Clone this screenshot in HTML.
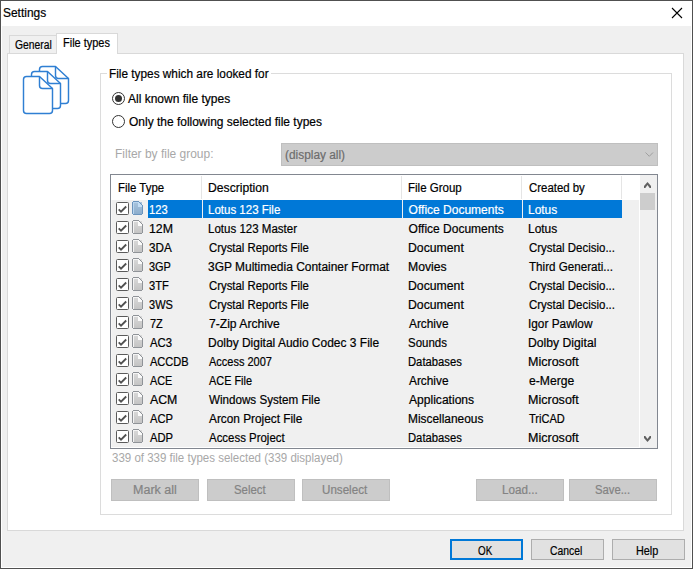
<!DOCTYPE html>
<html><head><meta charset="utf-8"><style>
html,body{margin:0;padding:0;width:693px;height:569px;overflow:hidden;background:#f0f0f0;}
.a{position:absolute;box-sizing:border-box;}
.t{position:absolute;transform-origin:0 0;font-family:"Liberation Sans",sans-serif;font-size:12px;line-height:15px;white-space:nowrap;color:#000;-webkit-text-stroke:0.2px currentColor;}
svg.a{overflow:visible;}
</style></head><body>
<div class="a" style="left:0px;top:0px;width:693px;height:569px;background:#fff;"></div><div class="a" style="left:2px;top:26px;width:689px;height:541px;background:#f0f0f0;"></div><div class="a" style="left:0;top:0;width:693px;height:569px;border:1px solid #505050;"></div><div class="t" style="left:3.10px;top:5.5px;transform:scaleX(0.9952);">Settings</div><svg class="a" style="left:671px;top:7px" width="12" height="12" viewBox="0 0 12 12"><path d="M1 1L11 11M11 1L1 11" stroke="#000" stroke-width="1.1" fill="none"/></svg><div class="a" style="left:7px;top:53px;width:677px;height:478px;border:1px solid #d9d9d9;background:#fff;"></div><div class="a" style="left:9px;top:35px;width:48px;height:18px;border:1px solid #d9d9d9;border-bottom:none;background:#f0f0f0;"></div><div class="a" style="left:56px;top:33px;width:62px;height:21px;border:1px solid #d9d9d9;border-bottom:none;background:#fff;"></div><div class="t" style="left:14.90px;top:37.5px;transform:scaleX(0.8595);">General</div><div class="t" style="left:62.59px;top:35.5px;transform:scaleX(0.9140);">File types</div><svg class="a" style="left:0;top:0" width="100" height="130"><path d="M42.5,66.5 L55.5,66.5 L68.5,78.5 L68.5,100.5 Q68.5,103.5 65.5,103.5 L42.5,103.5 Q39.5,103.5 39.5,100.5 L39.5,69.5 Q39.5,66.5 42.5,66.5 Z" fill="#fff" stroke="#2f7fd3" stroke-width="1.45" stroke-linejoin="round"/><path d="M55.5,66.5 L55.5,75.5 Q55.5,78.5 58.5,78.5 L68.5,78.5" fill="none" stroke="#2f7fd3" stroke-width="1.45"/><path d="M34.5,71.5 L47.5,71.5 L60.5,83.5 L60.5,105.5 Q60.5,108.5 57.5,108.5 L34.5,108.5 Q31.5,108.5 31.5,105.5 L31.5,74.5 Q31.5,71.5 34.5,71.5 Z" fill="#fff" stroke="#2f7fd3" stroke-width="1.45" stroke-linejoin="round"/><path d="M47.5,71.5 L47.5,80.5 Q47.5,83.5 50.5,83.5 L60.5,83.5" fill="none" stroke="#2f7fd3" stroke-width="1.45"/><path d="M26.5,76.5 L39.5,76.5 L52.5,88.5 L52.5,110.5 Q52.5,113.5 49.5,113.5 L26.5,113.5 Q23.5,113.5 23.5,110.5 L23.5,79.5 Q23.5,76.5 26.5,76.5 Z" fill="#fff" stroke="#2f7fd3" stroke-width="1.45" stroke-linejoin="round"/><path d="M39.5,76.5 L39.5,85.5 Q39.5,88.5 42.5,88.5 L52.5,88.5" fill="none" stroke="#2f7fd3" stroke-width="1.45"/></svg><div class="a" style="left:100px;top:73px;width:572px;height:442px;background:transparent;border:1px solid #dcdcdc;box-sizing:border-box;"></div><div class="a" style="left:107px;top:66px;width:164px;height:14px;background:#fff;"></div><div class="t" style="left:109.02px;top:66.5px;transform:scaleX(0.9845);">File types which are looked for</div><svg class="a" style="left:111px;top:91px" width="15" height="15"><circle cx="7.5" cy="7.5" r="6" fill="#fff" stroke="#333" stroke-width="1"/><circle cx="7.5" cy="7.5" r="3.5" fill="#333"/></svg><div class="t" style="left:128.40px;top:91.5px;transform:scaleX(1.0010);">All known file types</div><svg class="a" style="left:111px;top:114px" width="15" height="15"><circle cx="7.5" cy="7.5" r="6" fill="#fff" stroke="#333" stroke-width="1"/></svg><div class="t" style="left:128.90px;top:114.5px;transform:scaleX(0.9974);">Only the following selected file types</div><div class="t" style="left:115.20px;top:146.5px;transform:scaleX(0.9979);color:#a8a8a8;-webkit-text-stroke:0;">Filter by file group:</div><div class="a" style="left:281px;top:143px;width:377px;height:23px;background:#cccccc;border:1px solid #bfbfbf;box-sizing:border-box;"></div><div class="t" style="left:284.61px;top:147.5px;transform:scaleX(0.9898);color:#6d6d6d;">(display all)</div><svg class="a" style="left:644px;top:150px" width="11" height="8"><path d="M1.5 2.5L5.3 6.3L9 2.5" stroke="#a0a0a0" stroke-width="1" fill="none"/></svg><div class="a" style="left:110px;top:174px;width:548px;height:275px;background:#fff;border:1px solid #828790;box-sizing:border-box;"></div><div class="a" style="left:112px;top:200px;width:527px;height:247px;background:#f0f0f0;"></div><div class="a" style="left:111px;top:200px;width:1px;height:247px;background:#f7f7f7;"></div><div class="a" style="left:201px;top:176px;width:1px;height:23px;background:#e5e5e5;"></div><div class="a" style="left:401px;top:176px;width:1px;height:23px;background:#e5e5e5;"></div><div class="a" style="left:521px;top:176px;width:1px;height:23px;background:#e5e5e5;"></div><div class="a" style="left:621px;top:176px;width:1px;height:23px;background:#e5e5e5;"></div><div class="t" style="left:118.05px;top:180.5px;transform:scaleX(0.9511);">File Type</div><div class="t" style="left:207.59px;top:180.5px;transform:scaleX(1.0138);">Description</div><div class="t" style="left:407.64px;top:180.5px;transform:scaleX(0.9600);">File Group</div><div class="t" style="left:528.80px;top:180.5px;transform:scaleX(0.9508);">Created by</div><div class="a" style="left:640px;top:175px;width:17px;height:273px;background:#f0f0f0;"></div><div class="a" style="left:640px;top:193px;width:15px;height:17px;background:#cdcdcd;"></div><svg class="a" style="left:640px;top:178px" width="17" height="14"><polygon points="7.5,4 11,8 11,10 9.7,10 7.5,7.1 5.3,10 4,10 4,8" fill="#606060"/></svg><svg class="a" style="left:640px;top:432px" width="17" height="14"><polygon points="4,4 5.3,4 7.5,6.9 9.7,4 11,4 11,6 7.5,10 4,6" fill="#606060"/></svg><div class="a" style="left:148px;top:200px;width:54px;height:18px;background:#0078d7;"></div><div class="a" style="left:203px;top:200px;width:199px;height:18px;background:#0078d7;"></div><div class="a" style="left:403px;top:200px;width:119px;height:18px;background:#0078d7;"></div><div class="a" style="left:523px;top:200px;width:99px;height:18px;background:#0078d7;"></div><svg class="a" style="left:116px;top:202px" width="13" height="13"><rect x="0.5" y="0.5" width="12" height="12" rx="1" fill="#fff" stroke="#5a5a5a"/><path d="M2.7 7.4L5 9.7L10.2 4.5" stroke="#505050" stroke-width="1.8" fill="none"/></svg><svg class="a" style="left:132px;top:201px" width="11" height="14" shape-rendering="crispEdges"><defs><linearGradient id="g201" x1="0" y1="0" x2="0" y2="1"><stop offset="0" stop-color="#a9c4dd"/><stop offset="1" stop-color="#8cadcc"/></linearGradient></defs><rect x="1" y="1" width="9" height="12" fill="url(#g201)"/><rect x="1" y="1" width="6" height="1" fill="#b9d5ef"/><rect x="1" y="1" width="1" height="12" fill="#b9d5ef"/><rect x="6" y="1" width="1" height="5" fill="#c4def5"/><rect x="6" y="5" width="4" height="1" fill="#c4def5"/><rect x="7" y="2" width="1" height="3" fill="#c4def5"/><rect x="8" y="3" width="1" height="2" fill="#c4def5"/><rect x="9" y="4" width="1" height="1" fill="#c4def5"/><rect x="7" y="1" width="1" height="1" fill="#c4def5"/><rect x="1" y="0" width="6" height="1" fill="#6b94bd"/><rect x="7" y="1" width="1" height="1" fill="#6b94bd"/><rect x="8" y="2" width="1" height="1" fill="#6b94bd"/><rect x="9" y="3" width="1" height="1" fill="#6b94bd"/><rect x="10" y="4" width="1" height="9" fill="#6b94bd"/><rect x="0" y="1" width="1" height="12" fill="#6b94bd"/><rect x="1" y="13" width="9" height="1" fill="#6b94bd"/></svg><div class="t" style="left:149.17px;top:202.5px;transform:scaleX(0.9316);color:#fff;">123</div><div class="t" style="left:207.54px;top:202.5px;transform:scaleX(0.9595);color:#fff;">Lotus 123 File</div><div class="t" style="left:408.60px;top:202.5px;transform:scaleX(1.0000);color:#fff;">Office Documents</div><div class="t" style="left:527.80px;top:202.5px;transform:scaleX(0.9964);color:#fff;">Lotus</div><svg class="a" style="left:116px;top:221px" width="13" height="13"><rect x="0.5" y="0.5" width="12" height="12" rx="1" fill="#fff" stroke="#5a5a5a"/><path d="M2.7 7.4L5 9.7L10.2 4.5" stroke="#505050" stroke-width="1.8" fill="none"/></svg><svg class="a" style="left:132px;top:220px" width="11" height="14" shape-rendering="crispEdges"><defs><linearGradient id="g220" x1="0" y1="0" x2="0" y2="1"><stop offset="0" stop-color="#d9d9d9"/><stop offset="1" stop-color="#c4c4c4"/></linearGradient></defs><rect x="1" y="1" width="9" height="12" fill="url(#g220)"/><rect x="1" y="1" width="6" height="1" fill="#f4f4f4"/><rect x="1" y="1" width="1" height="12" fill="#f4f4f4"/><rect x="6" y="1" width="1" height="5" fill="#fbfbfb"/><rect x="6" y="5" width="4" height="1" fill="#fbfbfb"/><rect x="7" y="2" width="1" height="3" fill="#fbfbfb"/><rect x="8" y="3" width="1" height="2" fill="#fbfbfb"/><rect x="9" y="4" width="1" height="1" fill="#fbfbfb"/><rect x="7" y="1" width="1" height="1" fill="#fbfbfb"/><rect x="1" y="0" width="6" height="1" fill="#8f9398"/><rect x="7" y="1" width="1" height="1" fill="#8f9398"/><rect x="8" y="2" width="1" height="1" fill="#8f9398"/><rect x="9" y="3" width="1" height="1" fill="#8f9398"/><rect x="10" y="4" width="1" height="9" fill="#8f9398"/><rect x="0" y="1" width="1" height="12" fill="#8f9398"/><rect x="1" y="13" width="9" height="1" fill="#8f9398"/></svg><div class="t" style="left:149.07px;top:221.5px;transform:scaleX(1.0273);">12M</div><div class="t" style="left:207.54px;top:221.5px;transform:scaleX(0.9598);">Lotus 123 Master</div><div class="t" style="left:408.60px;top:221.5px;transform:scaleX(1.0000);">Office Documents</div><div class="t" style="left:527.80px;top:221.5px;transform:scaleX(0.9964);">Lotus</div><svg class="a" style="left:116px;top:240px" width="13" height="13"><rect x="0.5" y="0.5" width="12" height="12" rx="1" fill="#fff" stroke="#5a5a5a"/><path d="M2.7 7.4L5 9.7L10.2 4.5" stroke="#505050" stroke-width="1.8" fill="none"/></svg><svg class="a" style="left:132px;top:239px" width="11" height="14" shape-rendering="crispEdges"><defs><linearGradient id="g239" x1="0" y1="0" x2="0" y2="1"><stop offset="0" stop-color="#d9d9d9"/><stop offset="1" stop-color="#c4c4c4"/></linearGradient></defs><rect x="1" y="1" width="9" height="12" fill="url(#g239)"/><rect x="1" y="1" width="6" height="1" fill="#f4f4f4"/><rect x="1" y="1" width="1" height="12" fill="#f4f4f4"/><rect x="6" y="1" width="1" height="5" fill="#fbfbfb"/><rect x="6" y="5" width="4" height="1" fill="#fbfbfb"/><rect x="7" y="2" width="1" height="3" fill="#fbfbfb"/><rect x="8" y="3" width="1" height="2" fill="#fbfbfb"/><rect x="9" y="4" width="1" height="1" fill="#fbfbfb"/><rect x="7" y="1" width="1" height="1" fill="#fbfbfb"/><rect x="1" y="0" width="6" height="1" fill="#8f9398"/><rect x="7" y="1" width="1" height="1" fill="#8f9398"/><rect x="8" y="2" width="1" height="1" fill="#8f9398"/><rect x="9" y="3" width="1" height="1" fill="#8f9398"/><rect x="10" y="4" width="1" height="9" fill="#8f9398"/><rect x="0" y="1" width="1" height="12" fill="#8f9398"/><rect x="1" y="13" width="9" height="1" fill="#8f9398"/></svg><div class="t" style="left:149.13px;top:240.5px;transform:scaleX(0.9727);">3DA</div><div class="t" style="left:208.50px;top:240.5px;transform:scaleX(0.9476);">Crystal Reports File</div><div class="t" style="left:407.58px;top:240.5px;transform:scaleX(1.0204);">Document</div><div class="t" style="left:528.80px;top:240.5px;transform:scaleX(0.9551);">Crystal Decisio...</div><svg class="a" style="left:116px;top:259px" width="13" height="13"><rect x="0.5" y="0.5" width="12" height="12" rx="1" fill="#fff" stroke="#5a5a5a"/><path d="M2.7 7.4L5 9.7L10.2 4.5" stroke="#505050" stroke-width="1.8" fill="none"/></svg><svg class="a" style="left:132px;top:258px" width="11" height="14" shape-rendering="crispEdges"><defs><linearGradient id="g258" x1="0" y1="0" x2="0" y2="1"><stop offset="0" stop-color="#d9d9d9"/><stop offset="1" stop-color="#c4c4c4"/></linearGradient></defs><rect x="1" y="1" width="9" height="12" fill="url(#g258)"/><rect x="1" y="1" width="6" height="1" fill="#f4f4f4"/><rect x="1" y="1" width="1" height="12" fill="#f4f4f4"/><rect x="6" y="1" width="1" height="5" fill="#fbfbfb"/><rect x="6" y="5" width="4" height="1" fill="#fbfbfb"/><rect x="7" y="2" width="1" height="3" fill="#fbfbfb"/><rect x="8" y="3" width="1" height="2" fill="#fbfbfb"/><rect x="9" y="4" width="1" height="1" fill="#fbfbfb"/><rect x="7" y="1" width="1" height="1" fill="#fbfbfb"/><rect x="1" y="0" width="6" height="1" fill="#8f9398"/><rect x="7" y="1" width="1" height="1" fill="#8f9398"/><rect x="8" y="2" width="1" height="1" fill="#8f9398"/><rect x="9" y="3" width="1" height="1" fill="#8f9398"/><rect x="10" y="4" width="1" height="9" fill="#8f9398"/><rect x="0" y="1" width="1" height="12" fill="#8f9398"/><rect x="1" y="13" width="9" height="1" fill="#8f9398"/></svg><div class="t" style="left:149.19px;top:259.5px;transform:scaleX(0.9130);">3GP</div><div class="t" style="left:207.50px;top:259.5px;transform:scaleX(0.9961);">3GP Multimedia Container Format</div><div class="t" style="left:407.58px;top:259.5px;transform:scaleX(1.0162);">Movies</div><div class="t" style="left:528.80px;top:259.5px;transform:scaleX(0.9686);">Third Generati...</div><svg class="a" style="left:116px;top:278px" width="13" height="13"><rect x="0.5" y="0.5" width="12" height="12" rx="1" fill="#fff" stroke="#5a5a5a"/><path d="M2.7 7.4L5 9.7L10.2 4.5" stroke="#505050" stroke-width="1.8" fill="none"/></svg><svg class="a" style="left:132px;top:277px" width="11" height="14" shape-rendering="crispEdges"><defs><linearGradient id="g277" x1="0" y1="0" x2="0" y2="1"><stop offset="0" stop-color="#d9d9d9"/><stop offset="1" stop-color="#c4c4c4"/></linearGradient></defs><rect x="1" y="1" width="9" height="12" fill="url(#g277)"/><rect x="1" y="1" width="6" height="1" fill="#f4f4f4"/><rect x="1" y="1" width="1" height="12" fill="#f4f4f4"/><rect x="6" y="1" width="1" height="5" fill="#fbfbfb"/><rect x="6" y="5" width="4" height="1" fill="#fbfbfb"/><rect x="7" y="2" width="1" height="3" fill="#fbfbfb"/><rect x="8" y="3" width="1" height="2" fill="#fbfbfb"/><rect x="9" y="4" width="1" height="1" fill="#fbfbfb"/><rect x="7" y="1" width="1" height="1" fill="#fbfbfb"/><rect x="1" y="0" width="6" height="1" fill="#8f9398"/><rect x="7" y="1" width="1" height="1" fill="#8f9398"/><rect x="8" y="2" width="1" height="1" fill="#8f9398"/><rect x="9" y="3" width="1" height="1" fill="#8f9398"/><rect x="10" y="4" width="1" height="9" fill="#8f9398"/><rect x="0" y="1" width="1" height="12" fill="#8f9398"/><rect x="1" y="13" width="9" height="1" fill="#8f9398"/></svg><div class="t" style="left:149.17px;top:278.5px;transform:scaleX(0.9300);">3TF</div><div class="t" style="left:208.50px;top:278.5px;transform:scaleX(0.9476);">Crystal Reports File</div><div class="t" style="left:407.58px;top:278.5px;transform:scaleX(1.0204);">Document</div><div class="t" style="left:528.80px;top:278.5px;transform:scaleX(0.9551);">Crystal Decisio...</div><svg class="a" style="left:116px;top:297px" width="13" height="13"><rect x="0.5" y="0.5" width="12" height="12" rx="1" fill="#fff" stroke="#5a5a5a"/><path d="M2.7 7.4L5 9.7L10.2 4.5" stroke="#505050" stroke-width="1.8" fill="none"/></svg><svg class="a" style="left:132px;top:296px" width="11" height="14" shape-rendering="crispEdges"><defs><linearGradient id="g296" x1="0" y1="0" x2="0" y2="1"><stop offset="0" stop-color="#d9d9d9"/><stop offset="1" stop-color="#c4c4c4"/></linearGradient></defs><rect x="1" y="1" width="9" height="12" fill="url(#g296)"/><rect x="1" y="1" width="6" height="1" fill="#f4f4f4"/><rect x="1" y="1" width="1" height="12" fill="#f4f4f4"/><rect x="6" y="1" width="1" height="5" fill="#fbfbfb"/><rect x="6" y="5" width="4" height="1" fill="#fbfbfb"/><rect x="7" y="2" width="1" height="3" fill="#fbfbfb"/><rect x="8" y="3" width="1" height="2" fill="#fbfbfb"/><rect x="9" y="4" width="1" height="1" fill="#fbfbfb"/><rect x="7" y="1" width="1" height="1" fill="#fbfbfb"/><rect x="1" y="0" width="6" height="1" fill="#8f9398"/><rect x="7" y="1" width="1" height="1" fill="#8f9398"/><rect x="8" y="2" width="1" height="1" fill="#8f9398"/><rect x="9" y="3" width="1" height="1" fill="#8f9398"/><rect x="10" y="4" width="1" height="9" fill="#8f9398"/><rect x="0" y="1" width="1" height="12" fill="#8f9398"/><rect x="1" y="13" width="9" height="1" fill="#8f9398"/></svg><div class="t" style="left:149.18px;top:297.5px;transform:scaleX(0.9200);">3WS</div><div class="t" style="left:208.50px;top:297.5px;transform:scaleX(0.9476);">Crystal Reports File</div><div class="t" style="left:407.58px;top:297.5px;transform:scaleX(1.0204);">Document</div><div class="t" style="left:528.80px;top:297.5px;transform:scaleX(0.9551);">Crystal Decisio...</div><svg class="a" style="left:116px;top:316px" width="13" height="13"><rect x="0.5" y="0.5" width="12" height="12" rx="1" fill="#fff" stroke="#5a5a5a"/><path d="M2.7 7.4L5 9.7L10.2 4.5" stroke="#505050" stroke-width="1.8" fill="none"/></svg><svg class="a" style="left:132px;top:315px" width="11" height="14" shape-rendering="crispEdges"><defs><linearGradient id="g315" x1="0" y1="0" x2="0" y2="1"><stop offset="0" stop-color="#d9d9d9"/><stop offset="1" stop-color="#c4c4c4"/></linearGradient></defs><rect x="1" y="1" width="9" height="12" fill="url(#g315)"/><rect x="1" y="1" width="6" height="1" fill="#f4f4f4"/><rect x="1" y="1" width="1" height="12" fill="#f4f4f4"/><rect x="6" y="1" width="1" height="5" fill="#fbfbfb"/><rect x="6" y="5" width="4" height="1" fill="#fbfbfb"/><rect x="7" y="2" width="1" height="3" fill="#fbfbfb"/><rect x="8" y="3" width="1" height="2" fill="#fbfbfb"/><rect x="9" y="4" width="1" height="1" fill="#fbfbfb"/><rect x="7" y="1" width="1" height="1" fill="#fbfbfb"/><rect x="1" y="0" width="6" height="1" fill="#8f9398"/><rect x="7" y="1" width="1" height="1" fill="#8f9398"/><rect x="8" y="2" width="1" height="1" fill="#8f9398"/><rect x="9" y="3" width="1" height="1" fill="#8f9398"/><rect x="10" y="4" width="1" height="9" fill="#8f9398"/><rect x="0" y="1" width="1" height="12" fill="#8f9398"/><rect x="1" y="13" width="9" height="1" fill="#8f9398"/></svg><div class="t" style="left:150.10px;top:316.5px;transform:scaleX(0.9143);">7Z</div><div class="t" style="left:208.50px;top:316.5px;transform:scaleX(1.0100);">7-Zip Archive</div><div class="t" style="left:408.60px;top:316.5px;transform:scaleX(0.9875);">Archive</div><div class="t" style="left:527.81px;top:316.5px;transform:scaleX(0.9862);">Igor Pawlow</div><svg class="a" style="left:116px;top:335px" width="13" height="13"><rect x="0.5" y="0.5" width="12" height="12" rx="1" fill="#fff" stroke="#5a5a5a"/><path d="M2.7 7.4L5 9.7L10.2 4.5" stroke="#505050" stroke-width="1.8" fill="none"/></svg><svg class="a" style="left:132px;top:334px" width="11" height="14" shape-rendering="crispEdges"><defs><linearGradient id="g334" x1="0" y1="0" x2="0" y2="1"><stop offset="0" stop-color="#d9d9d9"/><stop offset="1" stop-color="#c4c4c4"/></linearGradient></defs><rect x="1" y="1" width="9" height="12" fill="url(#g334)"/><rect x="1" y="1" width="6" height="1" fill="#f4f4f4"/><rect x="1" y="1" width="1" height="12" fill="#f4f4f4"/><rect x="6" y="1" width="1" height="5" fill="#fbfbfb"/><rect x="6" y="5" width="4" height="1" fill="#fbfbfb"/><rect x="7" y="2" width="1" height="3" fill="#fbfbfb"/><rect x="8" y="3" width="1" height="2" fill="#fbfbfb"/><rect x="9" y="4" width="1" height="1" fill="#fbfbfb"/><rect x="7" y="1" width="1" height="1" fill="#fbfbfb"/><rect x="1" y="0" width="6" height="1" fill="#8f9398"/><rect x="7" y="1" width="1" height="1" fill="#8f9398"/><rect x="8" y="2" width="1" height="1" fill="#8f9398"/><rect x="9" y="3" width="1" height="1" fill="#8f9398"/><rect x="10" y="4" width="1" height="9" fill="#8f9398"/><rect x="0" y="1" width="1" height="12" fill="#8f9398"/><rect x="1" y="13" width="9" height="1" fill="#8f9398"/></svg><div class="t" style="left:150.10px;top:335.5px;transform:scaleX(0.9435);">AC3</div><div class="t" style="left:207.50px;top:335.5px;transform:scaleX(0.9982);">Dolby Digital Audio Codec 3 File</div><div class="t" style="left:407.65px;top:335.5px;transform:scaleX(0.9550);">Sounds</div><div class="t" style="left:527.78px;top:335.5px;transform:scaleX(1.0152);">Dolby Digital</div><svg class="a" style="left:116px;top:354px" width="13" height="13"><rect x="0.5" y="0.5" width="12" height="12" rx="1" fill="#fff" stroke="#5a5a5a"/><path d="M2.7 7.4L5 9.7L10.2 4.5" stroke="#505050" stroke-width="1.8" fill="none"/></svg><svg class="a" style="left:132px;top:353px" width="11" height="14" shape-rendering="crispEdges"><defs><linearGradient id="g353" x1="0" y1="0" x2="0" y2="1"><stop offset="0" stop-color="#d9d9d9"/><stop offset="1" stop-color="#c4c4c4"/></linearGradient></defs><rect x="1" y="1" width="9" height="12" fill="url(#g353)"/><rect x="1" y="1" width="6" height="1" fill="#f4f4f4"/><rect x="1" y="1" width="1" height="12" fill="#f4f4f4"/><rect x="6" y="1" width="1" height="5" fill="#fbfbfb"/><rect x="6" y="5" width="4" height="1" fill="#fbfbfb"/><rect x="7" y="2" width="1" height="3" fill="#fbfbfb"/><rect x="8" y="3" width="1" height="2" fill="#fbfbfb"/><rect x="9" y="4" width="1" height="1" fill="#fbfbfb"/><rect x="7" y="1" width="1" height="1" fill="#fbfbfb"/><rect x="1" y="0" width="6" height="1" fill="#8f9398"/><rect x="7" y="1" width="1" height="1" fill="#8f9398"/><rect x="8" y="2" width="1" height="1" fill="#8f9398"/><rect x="9" y="3" width="1" height="1" fill="#8f9398"/><rect x="10" y="4" width="1" height="9" fill="#8f9398"/><rect x="0" y="1" width="1" height="12" fill="#8f9398"/><rect x="1" y="13" width="9" height="1" fill="#8f9398"/></svg><div class="t" style="left:150.10px;top:354.5px;transform:scaleX(0.9214);">ACCDB</div><div class="t" style="left:208.50px;top:354.5px;transform:scaleX(0.9162);">Access 2007</div><div class="t" style="left:407.66px;top:354.5px;transform:scaleX(0.9375);">Databases</div><div class="t" style="left:527.76px;top:354.5px;transform:scaleX(1.0438);">Microsoft</div><svg class="a" style="left:116px;top:373px" width="13" height="13"><rect x="0.5" y="0.5" width="12" height="12" rx="1" fill="#fff" stroke="#5a5a5a"/><path d="M2.7 7.4L5 9.7L10.2 4.5" stroke="#505050" stroke-width="1.8" fill="none"/></svg><svg class="a" style="left:132px;top:372px" width="11" height="14" shape-rendering="crispEdges"><defs><linearGradient id="g372" x1="0" y1="0" x2="0" y2="1"><stop offset="0" stop-color="#d9d9d9"/><stop offset="1" stop-color="#c4c4c4"/></linearGradient></defs><rect x="1" y="1" width="9" height="12" fill="url(#g372)"/><rect x="1" y="1" width="6" height="1" fill="#f4f4f4"/><rect x="1" y="1" width="1" height="12" fill="#f4f4f4"/><rect x="6" y="1" width="1" height="5" fill="#fbfbfb"/><rect x="6" y="5" width="4" height="1" fill="#fbfbfb"/><rect x="7" y="2" width="1" height="3" fill="#fbfbfb"/><rect x="8" y="3" width="1" height="2" fill="#fbfbfb"/><rect x="9" y="4" width="1" height="1" fill="#fbfbfb"/><rect x="7" y="1" width="1" height="1" fill="#fbfbfb"/><rect x="1" y="0" width="6" height="1" fill="#8f9398"/><rect x="7" y="1" width="1" height="1" fill="#8f9398"/><rect x="8" y="2" width="1" height="1" fill="#8f9398"/><rect x="9" y="3" width="1" height="1" fill="#8f9398"/><rect x="10" y="4" width="1" height="9" fill="#8f9398"/><rect x="0" y="1" width="1" height="12" fill="#8f9398"/><rect x="1" y="13" width="9" height="1" fill="#8f9398"/></svg><div class="t" style="left:150.10px;top:373.5px;transform:scaleX(0.9042);">ACE</div><div class="t" style="left:208.50px;top:373.5px;transform:scaleX(0.9085);">ACE File</div><div class="t" style="left:408.60px;top:373.5px;transform:scaleX(0.9875);">Archive</div><div class="t" style="left:528.80px;top:373.5px;transform:scaleX(1.0114);">e-Merge</div><svg class="a" style="left:116px;top:392px" width="13" height="13"><rect x="0.5" y="0.5" width="12" height="12" rx="1" fill="#fff" stroke="#5a5a5a"/><path d="M2.7 7.4L5 9.7L10.2 4.5" stroke="#505050" stroke-width="1.8" fill="none"/></svg><svg class="a" style="left:132px;top:391px" width="11" height="14" shape-rendering="crispEdges"><defs><linearGradient id="g391" x1="0" y1="0" x2="0" y2="1"><stop offset="0" stop-color="#d9d9d9"/><stop offset="1" stop-color="#c4c4c4"/></linearGradient></defs><rect x="1" y="1" width="9" height="12" fill="url(#g391)"/><rect x="1" y="1" width="6" height="1" fill="#f4f4f4"/><rect x="1" y="1" width="1" height="12" fill="#f4f4f4"/><rect x="6" y="1" width="1" height="5" fill="#fbfbfb"/><rect x="6" y="5" width="4" height="1" fill="#fbfbfb"/><rect x="7" y="2" width="1" height="3" fill="#fbfbfb"/><rect x="8" y="3" width="1" height="2" fill="#fbfbfb"/><rect x="9" y="4" width="1" height="1" fill="#fbfbfb"/><rect x="7" y="1" width="1" height="1" fill="#fbfbfb"/><rect x="1" y="0" width="6" height="1" fill="#8f9398"/><rect x="7" y="1" width="1" height="1" fill="#8f9398"/><rect x="8" y="2" width="1" height="1" fill="#8f9398"/><rect x="9" y="3" width="1" height="1" fill="#8f9398"/><rect x="10" y="4" width="1" height="9" fill="#8f9398"/><rect x="0" y="1" width="1" height="12" fill="#8f9398"/><rect x="1" y="13" width="9" height="1" fill="#8f9398"/></svg><div class="t" style="left:150.10px;top:392.5px;transform:scaleX(1.0269);">ACM</div><div class="t" style="left:208.50px;top:392.5px;transform:scaleX(0.9693);">Windows System File</div><div class="t" style="left:408.60px;top:392.5px;transform:scaleX(1.0062);">Applications</div><div class="t" style="left:527.76px;top:392.5px;transform:scaleX(1.0438);">Microsoft</div><svg class="a" style="left:116px;top:411px" width="13" height="13"><rect x="0.5" y="0.5" width="12" height="12" rx="1" fill="#fff" stroke="#5a5a5a"/><path d="M2.7 7.4L5 9.7L10.2 4.5" stroke="#505050" stroke-width="1.8" fill="none"/></svg><svg class="a" style="left:132px;top:410px" width="11" height="14" shape-rendering="crispEdges"><defs><linearGradient id="g410" x1="0" y1="0" x2="0" y2="1"><stop offset="0" stop-color="#d9d9d9"/><stop offset="1" stop-color="#c4c4c4"/></linearGradient></defs><rect x="1" y="1" width="9" height="12" fill="url(#g410)"/><rect x="1" y="1" width="6" height="1" fill="#f4f4f4"/><rect x="1" y="1" width="1" height="12" fill="#f4f4f4"/><rect x="6" y="1" width="1" height="5" fill="#fbfbfb"/><rect x="6" y="5" width="4" height="1" fill="#fbfbfb"/><rect x="7" y="2" width="1" height="3" fill="#fbfbfb"/><rect x="8" y="3" width="1" height="2" fill="#fbfbfb"/><rect x="9" y="4" width="1" height="1" fill="#fbfbfb"/><rect x="7" y="1" width="1" height="1" fill="#fbfbfb"/><rect x="1" y="0" width="6" height="1" fill="#8f9398"/><rect x="7" y="1" width="1" height="1" fill="#8f9398"/><rect x="8" y="2" width="1" height="1" fill="#8f9398"/><rect x="9" y="3" width="1" height="1" fill="#8f9398"/><rect x="10" y="4" width="1" height="9" fill="#8f9398"/><rect x="0" y="1" width="1" height="12" fill="#8f9398"/><rect x="1" y="13" width="9" height="1" fill="#8f9398"/></svg><div class="t" style="left:150.10px;top:411.5px;transform:scaleX(0.9333);">ACP</div><div class="t" style="left:208.50px;top:411.5px;transform:scaleX(0.9851);">Arcon Project File</div><div class="t" style="left:407.61px;top:411.5px;transform:scaleX(0.9920);">Miscellaneous</div><div class="t" style="left:528.80px;top:411.5px;transform:scaleX(0.9179);">TriCAD</div><svg class="a" style="left:116px;top:430px" width="13" height="13"><rect x="0.5" y="0.5" width="12" height="12" rx="1" fill="#fff" stroke="#5a5a5a"/><path d="M2.7 7.4L5 9.7L10.2 4.5" stroke="#505050" stroke-width="1.8" fill="none"/></svg><svg class="a" style="left:132px;top:429px" width="11" height="14" shape-rendering="crispEdges"><defs><linearGradient id="g429" x1="0" y1="0" x2="0" y2="1"><stop offset="0" stop-color="#d9d9d9"/><stop offset="1" stop-color="#c4c4c4"/></linearGradient></defs><rect x="1" y="1" width="9" height="12" fill="url(#g429)"/><rect x="1" y="1" width="6" height="1" fill="#f4f4f4"/><rect x="1" y="1" width="1" height="12" fill="#f4f4f4"/><rect x="6" y="1" width="1" height="5" fill="#fbfbfb"/><rect x="6" y="5" width="4" height="1" fill="#fbfbfb"/><rect x="7" y="2" width="1" height="3" fill="#fbfbfb"/><rect x="8" y="3" width="1" height="2" fill="#fbfbfb"/><rect x="9" y="4" width="1" height="1" fill="#fbfbfb"/><rect x="7" y="1" width="1" height="1" fill="#fbfbfb"/><rect x="1" y="0" width="6" height="1" fill="#8f9398"/><rect x="7" y="1" width="1" height="1" fill="#8f9398"/><rect x="8" y="2" width="1" height="1" fill="#8f9398"/><rect x="9" y="3" width="1" height="1" fill="#8f9398"/><rect x="10" y="4" width="1" height="9" fill="#8f9398"/><rect x="0" y="1" width="1" height="12" fill="#8f9398"/><rect x="1" y="13" width="9" height="1" fill="#8f9398"/></svg><div class="t" style="left:150.10px;top:430.5px;transform:scaleX(0.9333);">ADP</div><div class="t" style="left:208.50px;top:430.5px;transform:scaleX(0.9532);">Access Project</div><div class="t" style="left:407.66px;top:430.5px;transform:scaleX(0.9375);">Databases</div><div class="t" style="left:527.76px;top:430.5px;transform:scaleX(1.0438);">Microsoft</div><div class="t" style="left:111.94px;top:450.5px;transform:scaleX(0.9586);color:#a8a8a8;-webkit-text-stroke:0;">339 of 339 file types selected (339 displayed)</div><div class="a" style="left:111px;top:479px;width:88px;height:22px;background:#cccccc;border:1px solid #bfbfbf;box-sizing:border-box;"></div><div class="t" style="left:133.16px;top:482.5px;transform:scaleX(1.0425);color:#838383;">Mark all</div><div class="a" style="left:207px;top:479px;width:88px;height:22px;background:#cccccc;border:1px solid #bfbfbf;box-sizing:border-box;"></div><div class="t" style="left:234.35px;top:482.5px;transform:scaleX(0.9469);color:#838383;">Select</div><div class="a" style="left:302px;top:479px;width:88px;height:22px;background:#cccccc;border:1px solid #bfbfbf;box-sizing:border-box;"></div><div class="t" style="left:322.33px;top:482.5px;transform:scaleX(0.9674);color:#838383;">Unselect</div><div class="a" style="left:476px;top:479px;width:88px;height:22px;background:#cccccc;border:1px solid #bfbfbf;box-sizing:border-box;"></div><div class="t" style="left:501.63px;top:482.5px;transform:scaleX(0.9714);color:#838383;">Load...</div><div class="a" style="left:569px;top:479px;width:88px;height:22px;background:#cccccc;border:1px solid #bfbfbf;box-sizing:border-box;"></div><div class="t" style="left:595.16px;top:482.5px;transform:scaleX(0.9400);color:#838383;">Save...</div><div class="a" style="left:450px;top:539px;width:73px;height:21px;background:#e1e1e1;border:2px solid #0078d7;box-sizing:border-box;"></div><div class="t" style="left:478.40px;top:543.5px;transform:scaleX(0.8176);">OK</div><div class="a" style="left:531px;top:539px;width:73px;height:21px;background:#e1e1e1;border:1px solid #adadad;box-sizing:border-box;"></div><div class="t" style="left:550.40px;top:543.5px;transform:scaleX(0.8622);">Cancel</div><div class="a" style="left:612px;top:539px;width:73px;height:21px;background:#e1e1e1;border:1px solid #adadad;box-sizing:border-box;"></div><div class="t" style="left:636.10px;top:543.5px;transform:scaleX(0.9043);">Help</div>
</body></html>
